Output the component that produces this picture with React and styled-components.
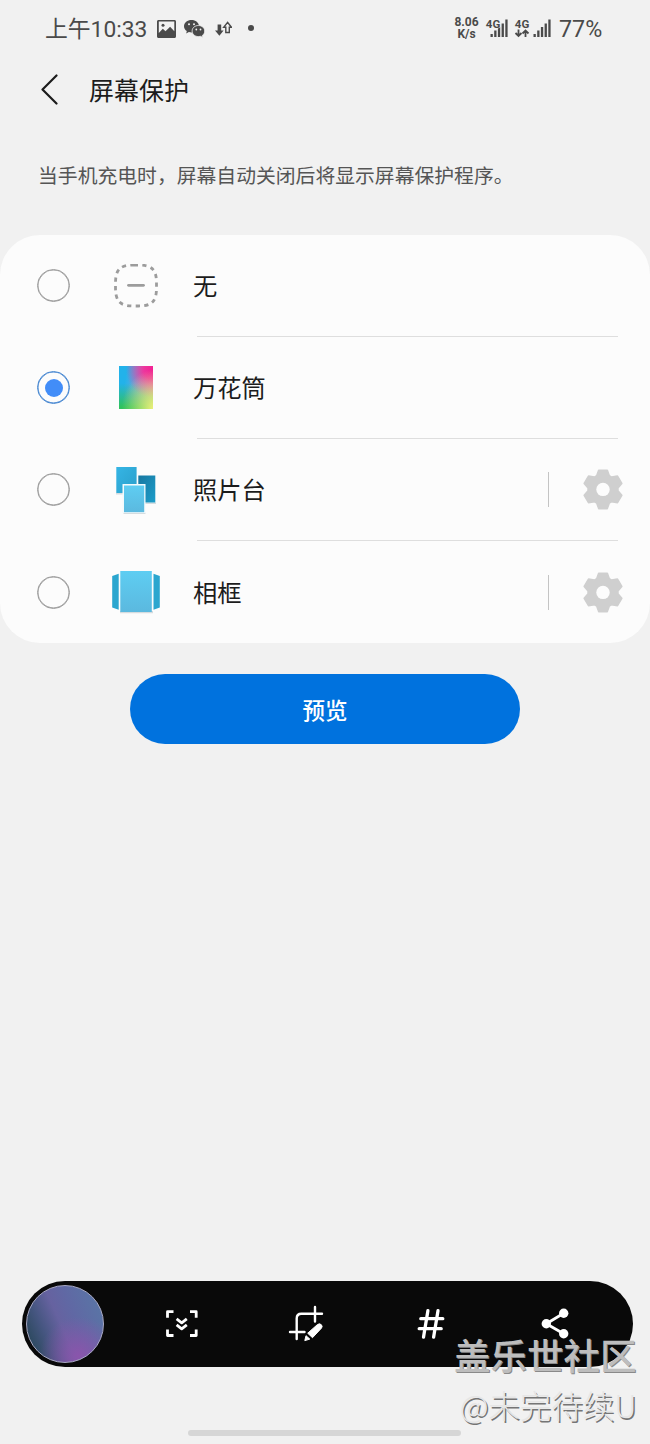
import React from 'react';
import styled, { createGlobalStyle } from 'styled-components';

const GlobalStyle = createGlobalStyle`
  * { box-sizing: border-box; }
  body { margin: 0; background: #f1f1f1; }
  svg { display: block; flex: none; }
`;

const Screen = styled.div`
  position: relative;
  width: 650px;
  height: 1444px;
  overflow: hidden;
  display: flex;
  flex-direction: column;
  background: #f1f1f1;
  color: #1c1c1c;
  font-family: Roboto, 'Noto Sans CJK SC', sans-serif;
`;

const StatusBar = styled.header`
  display: flex;
  align-items: center;
  justify-content: space-between;
  height: 57px;
  padding: 0 48px 0 45px;
  color: #4a4a4a;
`;

const StatusGroup = styled.div`
  display: flex;
  align-items: center;
`;

const Clock = styled.span`
  width: 111.5px;
  padding-top: 2px;
  font-size: 22.8px;
  font-weight: 400;
  line-height: 30px;
  white-space: nowrap;
`;

const Speed = styled.span`
  width: 26px;
  margin-right: 5px;
  font-size: 12px;
  font-weight: 700;
  line-height: 11.5px;
  text-align: center;
`;

const Battery = styled.span`
  width: 43px;
  margin-left: 8px;
  padding-top: 1px;
  font-size: 23.3px;
  font-weight: 400;
  line-height: 30px;
  white-space: nowrap;
`;

const TitleBar = styled.div`
  display: flex;
  align-items: center;
  height: 66px;
  padding-left: 37.5px;
`;

const Title = styled.h1`
  margin: 0 0 0 28.5px;
  padding-top: 3px;
  font-size: 25px;
  font-weight: 400;
  line-height: 36px;
`;

const Description = styled.p`
  margin: 38.5px 0 0 38px;
  height: 73px;
  font-size: 19.82px;
  line-height: 30px;
  color: #555;
  white-space: nowrap;
`;

const Card = styled.section`
  height: 408px;
  border-radius: 40px;
  background: #fcfcfc;
`;

const Row = styled.div`
  display: flex;
  align-items: center;
  height: 102.2px;
  padding-left: 37px;
`;

const Radio = styled.span`
  display: grid;
  place-items: center;
  width: 33px;
  height: 33px;
  border: 1.5px solid ${(p) => (p.$checked ? '#4284d0' : '#999')};
  box-shadow: inset 0 0 0 0.5px ${(p) => (p.$checked ? '#4284d0' : '#999')};
  border-radius: 50%;

  &::after {
    content: '';
    width: 18px;
    height: 18px;
    border-radius: 50%;
    background: ${(p) => (p.$checked ? '#428df8' : 'transparent')};
  }
`;

const IconSlot = styled.span`
  display: grid;
  place-items: center;
  width: 52px;
  height: 52px;
  margin: 0 31px 0 40px;
`;

const RowBody = styled.div`
  display: flex;
  align-items: center;
  flex: 1;
  height: 100%;
  margin-right: 32px;
  border-image: linear-gradient(90deg, transparent 4.5px, #dedede 4.5px) 1;
  border-width: 0 0 ${(p) => (p.$last ? 0 : '1px')};
  border-style: solid;
`;

const Label = styled.span`
  flex: 1;
  padding-top: 4px;
  font-size: 24.3px;
  line-height: 36px;
`;

const GearArea = styled.span`
  display: flex;
  align-items: center;
  height: 35px;
  margin-right: -4.5px;
  border-left: 1px solid #c4c4c4;
  padding-left: 33.5px;
`;

const PreviewButton = styled.button`
  align-self: center;
  flex: none;
  width: 390px;
  height: 70px;
  margin-top: 31.5px;
  padding: 3px 0 0;
  border: 0;
  border-radius: 35px;
  background: #0072de;
  color: #fff;
  font: 500 22.5px/34px Roboto, 'Noto Sans CJK SC', sans-serif;
`;

const Toolbar = styled.nav`
  display: flex;
  align-items: center;
  flex: none;
  width: 611px;
  height: 86px;
  margin: auto 0 77px 22px;
  padding-left: 4px;
  border-radius: 43px;
  background: #090909;
`;

const Thumb = styled.span`
  width: 78px;
  height: 78px;
  margin-right: 15.5px;
  border: 1.3px solid #a9a9c4;
  border-radius: 50%;
  background:
    radial-gradient(circle at 68% 92%, #8a55ac 0, rgba(138, 85, 172, 0) 45%),
    linear-gradient(66deg, #284759 8%, #465681 28%, #6662a0 46%, #6068a4 62%, #5779a6 100%);
`;

const Tool = styled.span`
  display: grid;
  place-items: center;
  width: 124.5px;
`;

const HomeBar = styled.div`
  position: absolute;
  left: 188px;
  bottom: 8px;
  width: 273px;
  height: 6px;
  border-radius: 3px;
  background: #d6d6d6;
`;

const Watermark = styled.div`
  position: absolute;
  right: 13.5px;
  bottom: 15px;
  display: flex;
  flex-direction: column;
  align-items: flex-end;
  white-space: nowrap;
  font-family: 'Noto Sans CJK SC', sans-serif;
`;

const Community = styled.span`
  font-size: 36.5px;
  font-weight: 500;
  line-height: 50px;
  color: #bdbdbd;
  text-shadow: 1px 1.3px 0 #8a8a8a;
`;

const Author = styled.span`
  font-size: 31.5px;
  font-weight: 300;
  line-height: 49px;
  color: #e6e6e6;
  text-shadow: 1.5px 1.5px 0 #757575;
`;

const PictureIcon = () => (
  <svg width="19" height="18" viewBox="0 0 19 18">
    <path fillRule="evenodd" fill="#4a4a4a" d="M1.500 0h16A1.400 1.400 0 0 1 19 1.400v15.200a1.400 1.400 0 0 1-1.500 1.400h-16A1.400 1.400 0 0 1 0 16.600V1.400A1.400 1.400 0 0 1 1.500 0ZM1.800 1.500v11.500l4-4.200 2.700 2.500 4.600-4.500 4.200 4.500V1.500Z" />
    <circle cx="6" cy="5.300" r="1.500" fill="#4a4a4a" />
  </svg>
);

const ChatIcon = () => (
  <svg width="21" height="18" viewBox="0 0 21 18">
    <path fill="#4a4a4a" d="M7.500 0C3.400 0 0 2.700 0 6.200c0 2 1.100 3.700 2.800 4.900L2.200 13.500l2.700-1.400c.9.200 1.800.3 2.700.3C11.700 12.400 15 9.700 15 6.200S11.600 0 7.500 0Z" />
    <path fill="#4a4a4a" stroke="#f1f1f1" strokeWidth=".8" d="M14.400 5.500c-3.500 0-6.300 2.400-6.300 5.500s2.800 5.600 6.300 5.600c.8 0 1.500-.1 2.200-.3l2.300 1.200-.6-2c1.500-1 2.400-2.600 2.400-4.500 0-3.100-2.800-5.500-6.300-5.500Z" />
    <g fill="#f1f1f1"><circle cx="5" cy="4.300" r="1" /><circle cx="10" cy="4.300" r="1" /><circle cx="12.300" cy="9.500" r=".9" /><circle cx="16.500" cy="9.500" r=".9" /></g>
  </svg>
);

const TransferIcon = () => (
  <svg width="17" height="16" viewBox="0 0 17 16">
    <path fill="#4a4a4a" d="M2.600 3.500h3.600v6h2.400L4.400 14.800 0 9.500h2.600Z" />
    <path fill="none" stroke="#4a4a4a" strokeWidth="1.400" d="M10.800 11.500V6.200H8.700L12.600 1.400l3.800 4.800h-2.100v5.300Z" />
  </svg>
);

const Bars = ({ x }) => (
  <g fill="#4a4a4a">
    {[3, 6.5, 10, 13.5, 17.5].map((h, i) => (
      <rect key={h} x={x + i * 3.7} y={18 - h} width="2.300" height={h} />
    ))}
  </g>
);

const SignalIcon = ({ arrows }) => (
  <svg width={arrows ? 37 : 23} height="19" viewBox={`0 0 ${arrows ? 37 : 23} 19`} overflow="visible">
    <Bars x={arrows ? 19.5 : 5.5} />
    <text x="0.800" y="8.800" fontSize="11.500" fontWeight="700" fill="#4a4a4a" stroke="#f1f1f1" strokeWidth="1" paintOrder="stroke" fontFamily="Roboto">4G</text>
    {arrows && <path fill="none" stroke="#4a4a4a" strokeWidth="1.800" d="M4.500 10.500V17M1.500 14l3 3 3-3M11.500 18v-6.500M8.500 14.500l3-3 3 3" />}
  </svg>
);

const BackIcon = () => (
  <svg width="23" height="32" viewBox="0 0 23 32">
    <path d="M18.500 1.500 4.500 15.500l14 14" fill="none" stroke="#1c1c1c" strokeWidth="2.200" strokeLinecap="round" strokeLinejoin="round" />
  </svg>
);

const NoneIcon = () => (
  <svg width="44" height="44" viewBox="0 0 44 44" fill="none" stroke="#9c9c9c">
    <path strokeWidth="2.800" strokeDasharray="4.200 4.270" d="M19.800 1h4.400C38 1 42.500 5.500 42.500 19.300v4.400C42.500 37.500 38 42 24.200 42h-4.400C6 42 1.500 37.500 1.500 23.700v-4.400C1.500 5.500 6 1 19.800 1Z" />
    <path strokeWidth="2.800" strokeLinecap="round" d="M14.500 21.300h15" />
  </svg>
);

const Swatch = styled.span`
  width: 33.5px;
  height: 43px;
  background:
    radial-gradient(ellipse at 105% 100%, #f6f27a 0, rgba(236, 232, 125, 0) 65%),
    radial-gradient(ellipse 80% 66% at 100% 8%, #f41f92 0, #ec379e 35%, rgba(215, 110, 190, 0) 100%),
    linear-gradient(0deg, #2fc25e 5%, rgba(60, 200, 150, 0) 60%),
    linear-gradient(100deg, #22b2ea 20%, #93a4d6 70%, #d8a6bb 100%);
`;

const TableIcon = () => (
  <svg width="52" height="52" viewBox="0 0 52 52">
    <defs>
      <linearGradient id="tl" x1="0" y1="0" x2="1" y2="1"><stop stopColor="#35b5e5" /><stop offset="1" stopColor="#2a9fca" /></linearGradient>
      <linearGradient id="tr" x1="0" y1="0" x2="1" y2="1"><stop stopColor="#1877a0" /><stop offset="1" stopColor="#1c9dca" /></linearGradient>
      <linearGradient id="front" x1="0" y1="0" x2="0" y2="1"><stop stopColor="#5ecdf2" /><stop offset="1" stopColor="#5bb9df" /></linearGradient>
    </defs>
    <path fill="#d6dcdf" d="M6 29h21v1.500H6ZM29 38.500h17V40H29ZM13.500 48.500h22V50h-22Z" />
    <path fill="url(#tl)" d="M6.300 3h20.300v26H6.300Z" />
    <path fill="url(#tr)" d="M28.300 11.500h17v27h-17Z" />
    <path fill="#f3fafc" d="M12.500 20h23v29h-23Z" />
    <path fill="url(#front)" d="M14 21.500h20.200v26.700H14Z" />
  </svg>
);

const FrameIcon = () => (
  <svg width="52" height="52" viewBox="0 0 52 52">
    <path fill="#2ba6cf" d="m2.200 10 6.500-2.200v36l-6.500-2.200ZM43.500 7.800l6.300 2.200v31.600l-6.300 2.200Z" />
    <path fill="#d6dcdf" d="M10 45h33v2.300H10Z" />
    <path fill="url(#front)" d="M10.300 5h31.500v41H10.300Z" />
  </svg>
);

const gearPoints = Array.from({ length: 6 }, (_, i) => {
  const a = (i * Math.PI) / 3;
  return [[-6.3, -13.6], [-4.3, -19.2], [4.3, -19.2], [6.3, -13.6]]
    .map(([x, y]) => `${(x * Math.cos(a) - y * Math.sin(a)).toFixed(2)},${(x * Math.sin(a) + y * Math.cos(a)).toFixed(2)}`)
    .join(' ');
}).join(' ');

const GearIcon = () => (
  <svg width="40" height="42" viewBox="-20 -21.400 40 42">
    <polygon points={gearPoints} fill="#cfcfcf" stroke="#cfcfcf" strokeWidth="1.600" strokeLinejoin="round" />
    <circle r="6.700" fill="#fcfcfc" />
  </svg>
);

const ToolIcon = ({ children }) => (
  <svg width="44" height="44" viewBox="0 0 44 44" fill="none" stroke="#fff" strokeWidth="2.800" strokeLinejoin="round">
    {children}
  </svg>
);

const tools = {
  scroll: (
    <>
      <path d="M13.500 9.700H7.500v6M30 9.700h6.200v6M7.500 27.500v6h6M36.200 27.500v6H30" />
      <path d="m16.600 16.800 5.100 4 5.100-4M16.600 22.800l5.100 4 5.100-4" />
    </>
  ),
  crop: (
    <>
      <path strokeWidth="2.400" strokeLinecap="round" d="M12.700 37V16.500q0-4.700 4.700-4.700H38M31 5v14.500M6 30h14.500" />
      <path fill="#fff" strokeWidth="1" d="M23.700 31.200 33.500 22.500q2.200-1.500 3.900.3 1.500 1.700 0 3.400l-8.900 9.500ZM22 33.700l3.800 3.400-5 1.500Z" />
    </>
  ),
  hash: <path strokeWidth="3.300" strokeLinecap="round" d="M18.900 8.700l-4.400 26.500M29 8.700l-4.400 26.500M11.800 16.700h22M10.200 26.700h22" />,
  share: (
    <>
      <path d="M30.700 11.300 13.300 21.700l17.400 10" />
      <g fill="#fff" stroke="none"><circle cx="30.700" cy="11.300" r="4.700" /><circle cx="13.300" cy="21.700" r="4.700" /><circle cx="30.700" cy="31.700" r="4.700" /></g>
    </>
  ),
};

const options = [
  { label: '无', icon: <NoneIcon /> },
  { label: '万花筒', icon: <Swatch />, checked: true },
  { label: '照片台', icon: <TableIcon />, gear: true },
  { label: '相框', icon: <FrameIcon />, gear: true },
];

const Gap = styled.span`
  width: ${(p) => p.$w}px;
`;

const Dot = styled.span`
  width: 6px;
  height: 6px;
  margin: -2px 0 0 16px;
  border-radius: 50%;
  background: #4a4a4a;
`;

export default function App() {
  return (
    <Screen>
      <GlobalStyle />
      <StatusBar>
        <StatusGroup>
          <Clock>上午10:33</Clock>
          <PictureIcon />
          <Gap $w={8.5} />
          <ChatIcon />
          <Gap $w={9.5} />
          <TransferIcon />
          <Dot />
        </StatusGroup>
        <StatusGroup>
          <Speed>8.06<br />K/s</Speed>
          <SignalIcon />
          <Gap $w={6.5} />
          <SignalIcon arrows />
          <Battery>77%</Battery>
        </StatusGroup>
      </StatusBar>
      <TitleBar>
        <BackIcon />
        <Title>屏幕保护</Title>
      </TitleBar>
      <Description>当手机充电时，屏幕自动关闭后将显示屏幕保护程序。</Description>
      <Card>
        {options.map((o, i) => (
          <Row key={o.label}>
            <Radio $checked={o.checked} />
            <IconSlot>{o.icon}</IconSlot>
            <RowBody $last={i === options.length - 1}>
              <Label>{o.label}</Label>
              {o.gear && <GearArea><GearIcon /></GearArea>}
            </RowBody>
          </Row>
        ))}
      </Card>
      <PreviewButton>预览</PreviewButton>
      <Toolbar>
        <Thumb />
        {Object.entries(tools).map(([name, art]) => (
          <Tool key={name}><ToolIcon>{art}</ToolIcon></Tool>
        ))}
      </Toolbar>
      <HomeBar />
      <Watermark>
        <Community>盖乐世社区</Community>
        <Author>@未完待续U</Author>
      </Watermark>
    </Screen>
  );
}
